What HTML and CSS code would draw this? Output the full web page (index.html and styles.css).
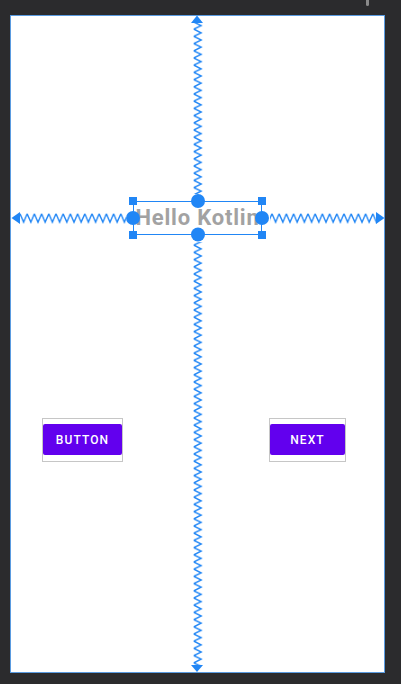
FILE: index.html
```
<!DOCTYPE html>
<html>
<head>
<meta charset="utf-8">
<link rel="stylesheet" href="styles.css">
</head>
<body>
<div class="scrollmark"></div>
<div class="canvas">
  <div class="textview">Hello Kotlin</div>
  <div class="btnwrap btn-left"><div class="btn">BUTTON</div></div>
  <div class="btnwrap btn-right"><div class="btn">NEXT</div></div>
</div>
<svg class="overlay" width="401" height="684" viewBox="0 0 401 684" xmlns="http://www.w3.org/2000/svg">
  <defs>
    <pattern id="zv" patternUnits="userSpaceOnUse" x="191" y="22" width="13" height="7.2">
      <polyline points="2.8,0 10.2,3.6 2.8,7.2" fill="none" stroke="#2186f5" stroke-width="1.4"/>
    </pattern>
    <pattern id="zh" patternUnits="userSpaceOnUse" x="20" y="212" width="7.2" height="12">
      <polyline points="0,1.8 3.6,10.2 7.2,1.8" fill="none" stroke="#2186f5" stroke-width="1.4"/>
    </pattern>
  </defs>
  <!-- vertical constraint -->
  <rect x="191" y="22" width="13" height="172" fill="url(#zv)"/>
  <rect x="191" y="242" width="13" height="424" fill="url(#zv)"/>
  <polygon points="191,23 203,23 197,15.5" fill="#2186f5"/>
  <polygon points="191,665 203,665 197,672" fill="#2186f5"/>
  <!-- horizontal constraint -->
  <rect x="20" y="212" width="106" height="12" fill="url(#zh)"/>
  <rect x="270" y="212" width="107" height="12" fill="url(#zh)"/>
  <polygon points="20,212 20,224 11.5,218" fill="#2186f5"/>
  <polygon points="376,212 376,224 384.5,218" fill="#2186f5"/>
  <!-- selection box -->
  <rect x="133.5" y="201.5" width="128" height="33" fill="none" stroke="#2186f5" stroke-width="1"/>
  <rect x="129" y="197" width="8" height="8" fill="#2186f5"/>
  <rect x="258" y="197" width="8" height="8" fill="#2186f5"/>
  <rect x="129" y="231" width="8" height="8" fill="#2186f5"/>
  <rect x="258" y="231" width="8" height="8" fill="#2186f5"/>
  <circle cx="198" cy="201" r="7" fill="#2186f5"/>
  <circle cx="198" cy="234.5" r="7" fill="#2186f5"/>
  <circle cx="133" cy="218" r="7" fill="#2186f5"/>
  <circle cx="262" cy="218" r="7" fill="#2186f5"/>
</svg>
</body>
</html>
```
FILE: styles.css
```
html, body {
  margin: 0;
  padding: 0;
}
body {
  width: 401px;
  height: 684px;
  background: #2b2b2d;
  position: relative;
  overflow: hidden;
  padding-top: 15px;
  padding-left: 10px;
  box-sizing: border-box;
  font-family: Roboto, "Liberation Sans", sans-serif;
}
.scrollmark {
  position: absolute;
  left: 366px;
  top: -3px;
  width: 3px;
  height: 9px;
  border-radius: 2px;
  background: #8a8a8a;
}
.canvas {
  position: relative;
  width: 375px;
  height: 658px;
  box-sizing: border-box;
  background: #ffffff;
  border: 1px solid #5a9be0;
}
.textview {
  position: absolute;
  left: 122px;
  top: 185px;
  width: 129px;
  height: 34px;
  line-height: 34px;
  text-align: center;
  font-size: 22px;
  font-weight: 700;
  letter-spacing: 0.8px;
  color: #a2a2a2;
  white-space: nowrap;
  display: flex;
  justify-content: center;
}
.btnwrap {
  position: absolute;
  top: 402px;
  height: 44px;
  box-sizing: border-box;
  border: 1px solid #c6c6c6;
  padding: 5px 0 6px 0;
  display: flex;
}
.btn-left {
  left: 31px;
  width: 81px;
}
.btn-right {
  left: 258px;
  width: 77px;
}
.btn {
  flex: 1;
  background: #6200ee;
  border-radius: 2px;
  color: #ffffff;
  font-size: 12px;
  font-weight: 500;
  letter-spacing: 1.1px;
  display: flex;
  align-items: center;
  justify-content: center;
}
.overlay {
  position: absolute;
  left: 0;
  top: 0;
}
```
